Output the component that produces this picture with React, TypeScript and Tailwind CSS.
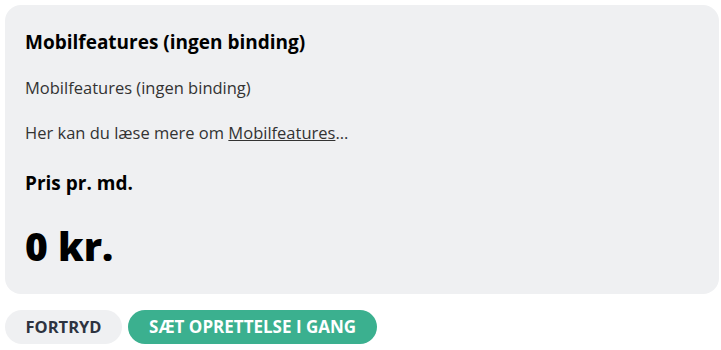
import React from 'react';

const App: React.FC = () => {
  return (
    <div className="bg-white pb-[5px] pl-[5px] pr-[2px] pt-[5px] font-['Open_Sans',sans-serif] text-[#222]">
      <div className="rounded-2xl bg-[#eff0f2] px-5 pb-[22px] pt-[17px]">
        <h2 className="text-[19px] font-bold leading-[40px] text-black">Mobilfeatures (ingen binding)</h2>
        <p className="mt-[6px] text-[16.5px] leading-[40px] text-[#333]">Mobilfeatures (ingen binding)</p>
        <p className="mt-[5px] text-[16.5px] leading-[40px] text-[#333]">
          Her kan du læse mere om{' '}
          <a href="#" className="underline">
            Mobilfeatures
          </a>
          ...
        </p>
        <h3 className="mt-[10px] text-[19px] font-bold leading-[40px] text-black">Pris pr. md.</h3>
        <p className="mt-[17px] text-[39px] font-extrabold leading-[52px] text-black">0 kr.</p>
      </div>
      <div className="mt-[16px] flex gap-[6px]">
        <button
          type="button"
          className="h-[34px] rounded-full bg-[#eff0f2] px-[20.5px] text-[16.5px] font-bold uppercase text-[#2d3340]"
        >
          Fortryd
        </button>
        <button
          type="button"
          className="h-[34px] rounded-full bg-[#3bb08f] px-[21px] text-[17px] font-bold uppercase text-white"
        >
          Sæt oprettelse i gang
        </button>
      </div>
    </div>
  );
};

export default App;
